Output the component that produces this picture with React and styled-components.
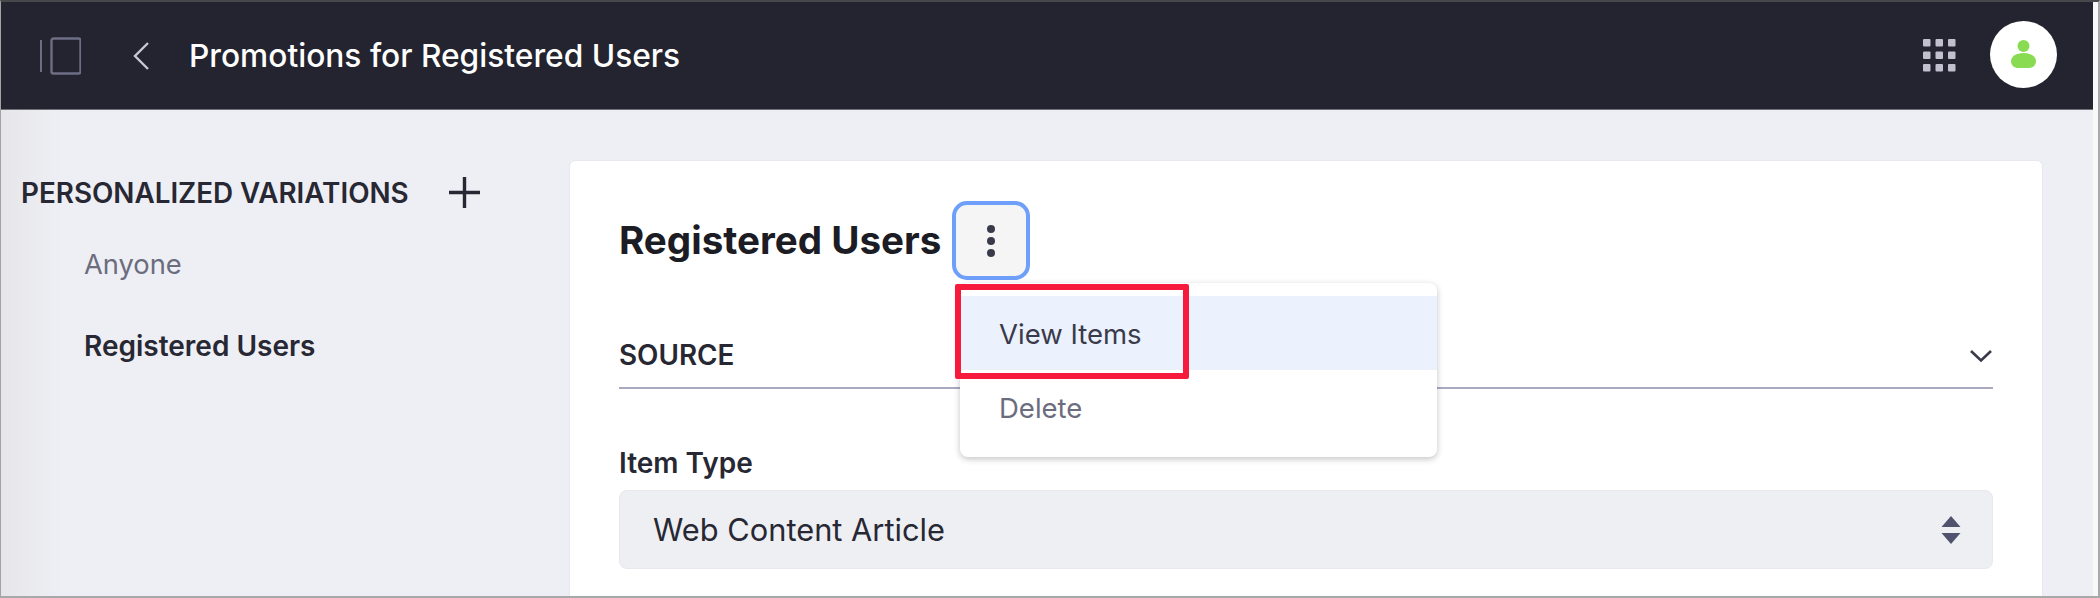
import React from 'react';
import styled, { createGlobalStyle } from 'styled-components';

const GlobalStyle = createGlobalStyle`
  html, body {
    margin: 0;
    padding: 0;
    background: #fff;
  }

  * {
    box-sizing: border-box;
  }
`;

const Frame = styled.div`
  width: 2100px;
  height: 598px;
  display: flex;
  flex-direction: column;
  overflow: hidden;
  padding-right: 5px;
  background: #f8f8f9;
  border-top: 2px solid #48484c;
  border-left: 1px solid #a3a3a5;
  border-right: 2px solid #a8a8aa;
  border-bottom: 2px solid #a8a8aa;
  font-family: Inter, "Liberation Sans", sans-serif;
`;

const Header = styled.header`
  flex: none;
  height: 108px;
  display: flex;
  align-items: center;
  padding: 0 36px 0 39px;
  background: #23242f;
  border-bottom: 1px solid #6f7078;
`;

const HeaderTitle = styled.h1`
  flex: 1;
  margin: 0 0 0 39px;
  color: #fff;
  font-size: 31.7px;
  font-weight: 500;
  line-height: 38px;
`;

const ToggleIcon = styled.svg`
  display: block;
  margin-right: 51px;
`;

const GridIcon = styled.svg`
  display: block;
  margin-right: 34px;
`;

const Avatar = styled.div`
  width: 67px;
  height: 67px;
  margin-top: -3px;
  border-radius: 50%;
  background: #fff;
  display: flex;
  align-items: center;
  justify-content: center;
`;

const Main = styled.main`
  flex: 1;
  min-height: 0;
  display: flex;
  background: linear-gradient(90deg, #e6e6ea 0, #eeeff4 60px);
`;

const Sidebar = styled.aside`
  flex: none;
  width: 568px;
  padding: 66px 0 0 20px;
`;

const SidebarHeading = styled.div`
  display: flex;
  align-items: center;
  height: 32px;
`;

const HeadingText = styled.h2`
  width: 427px;
  margin: 2px 0 0;
  color: #272833;
  font-size: 27.8px;
  font-weight: 600;
  line-height: 34px;
  white-space: nowrap;
`;

const VariationList = styled.nav`
  display: flex;
  flex-direction: column;
  gap: 49px;
  margin-top: 41px;
  padding-left: 63px;
`;

const Variation = styled.a`
  color: ${(p) => (p.$active ? '#272833' : '#6b6c7e')};
  font-size: ${(p) => (p.$active ? '28px' : '27.3px')};
  font-weight: ${(p) => (p.$active ? 600 : 400)};
  line-height: 32px;
`;

const Card = styled.section`
  position: relative;
  flex: none;
  width: 1474px;
  margin-top: 50px;
  padding: 40px 49px 0;
  background: #fff;
  border: 1px solid #e7e7ed;
  border-bottom: 0;
  border-radius: 6px 6px 0 0;
`;

const TitleRow = styled.div`
  display: flex;
  align-items: center;
  gap: 11px;
`;

const CardTitle = styled.h3`
  margin: -2px 0 0;
  color: #1c1c24;
  font-size: 38.6px;
  font-weight: 700;
  line-height: 46px;
`;

const KebabButton = styled.button`
  width: 78px;
  height: 79px;
  padding: 0;
  display: flex;
  align-items: center;
  justify-content: center;
  background: #f5f5f6;
  border: 4px solid #6e9ffb;
  border-radius: 15px;
`;

const SectionHeader = styled.div`
  height: 109px;
  display: flex;
  align-items: flex-end;
  justify-content: space-between;
  padding-bottom: 17px;
  border-bottom: 2px solid #a9a9c0;
`;

const SectionTitle = styled.span`
  color: #272833;
  font-size: 27.8px;
  font-weight: 600;
  line-height: 30px;
`;

const Chevron = styled.svg`
  display: block;
  margin-bottom: 7px;
`;

const FieldLabel = styled.label`
  display: block;
  margin: 59px 0 12px;
  color: #272833;
  font-size: 28px;
  font-weight: 600;
  line-height: 30px;
`;

const SelectBox = styled.div`
  height: 79px;
  display: flex;
  align-items: center;
  justify-content: space-between;
  padding: 0 31px 0 33px;
  color: #272833;
  font-size: 30.8px;
  background: #eeeff3;
  border: 1px solid #e7e7ed;
  border-radius: 8px;
`;

const Menu = styled.ul`
  position: absolute;
  top: 122px;
  left: 390px;
  width: 477px;
  height: 174px;
  margin: 0;
  padding: 13px 0;
  list-style: none;
  background: #fff;
  border-radius: 8px;
  box-shadow: 0 2px 6px rgba(39, 40, 51, 0.28);
`;

const MenuItem = styled.li`
  height: 74px;
  display: flex;
  align-items: center;
  padding: 2px 0 0 39px;
  color: ${(p) => (p.$active ? '#393a4a' : '#6b6c7e')};
  font-size: 27.5px;
  background: ${(p) => (p.$active ? '#ebf1fd' : 'transparent')};
`;

const Callout = styled.div`
  position: absolute;
  top: 123px;
  left: 385px;
  width: 234px;
  height: 95px;
  border: 6px solid #f61a3c;
  border-radius: 2px;
  pointer-events: none;
`;

const App = () => {
  return (
    <>
      <GlobalStyle />
      <Frame>
        <Header>
          <ToggleIcon width="41" height="38" viewBox="0 0 41 38" fill="none">
            <path d="M1 3v32" stroke="#6d6e80" strokeWidth="2" />
            <rect x="11.5" y="1.5" width="29" height="35" rx="2" stroke="#6d6e86" strokeWidth="2.4" />
          </ToggleIcon>
          <svg width="18" height="30" viewBox="0 0 18 30" fill="none">
            <path d="M16 2 3 15l13 13" stroke="#c8c8d2" strokeWidth="2.4" />
          </svg>
          <HeaderTitle>Promotions for Registered Users</HeaderTitle>
          <GridIcon width="33" height="33" viewBox="0 0 33 33" fill="#c0c0ce">
            {[0, 12.5, 25].map((y) =>
              [0, 12.5, 25].map((x) => <rect key={`${x}-${y}`} x={x} y={y} width="7.5" height="7.5" rx="1" />)
            )}
          </GridIcon>
          <Avatar>
            <svg width="25" height="28" viewBox="0 0 25 28" fill="#89dc52">
              <circle cx="12.5" cy="6" r="6" />
              <path d="M12.500 13c7.200 0 12.500 3.600 12.500 8 0 4.500-3.500 7-7 7H7c-3.500 0-7-2.500-7-7 0-4.400 5.300-8 12.500-8Z" />
            </svg>
          </Avatar>
        </Header>
        <Main>
          <Sidebar>
            <SidebarHeading>
              <HeadingText>PERSONALIZED VARIATIONS</HeadingText>
              <svg width="33" height="33" viewBox="0 0 33 33" fill="none">
                <path d="M16.500 1v31M1 16.500h31" stroke="#272833" strokeWidth="3.400" />
              </svg>
            </SidebarHeading>
            <VariationList>
              <Variation>Anyone</Variation>
              <Variation $active>Registered Users</Variation>
            </VariationList>
          </Sidebar>
          <Card>
            <TitleRow>
              <CardTitle>Registered Users</CardTitle>
              <KebabButton aria-label="Options">
                <svg width="10" height="34" viewBox="0 0 10 34" fill="#393a4a">
                  <circle cx="5" cy="5" r="4" />
                  <circle cx="5" cy="17" r="4" />
                  <circle cx="5" cy="29" r="4" />
                </svg>
              </KebabButton>
            </TitleRow>
            <SectionHeader>
              <SectionTitle>SOURCE</SectionTitle>
              <Chevron width="24" height="14" viewBox="0 0 24 14" fill="none">
                <path d="m2 2 10 9.500L22 2" stroke="#393a4a" strokeWidth="2.600" />
              </Chevron>
            </SectionHeader>
            <FieldLabel>Item Type</FieldLabel>
            <SelectBox>
              Web Content Article
              <svg width="20" height="28" viewBox="0 0 20 28" fill="#50526e">
                <path d="M10 0 19.500 11H.5ZM10 28 .5 17h19Z" />
              </svg>
            </SelectBox>
            <Menu>
              <MenuItem $active>View Items</MenuItem>
              <MenuItem>Delete</MenuItem>
            </Menu>
            <Callout />
          </Card>
        </Main>
      </Frame>
    </>
  );
};

export default App;
